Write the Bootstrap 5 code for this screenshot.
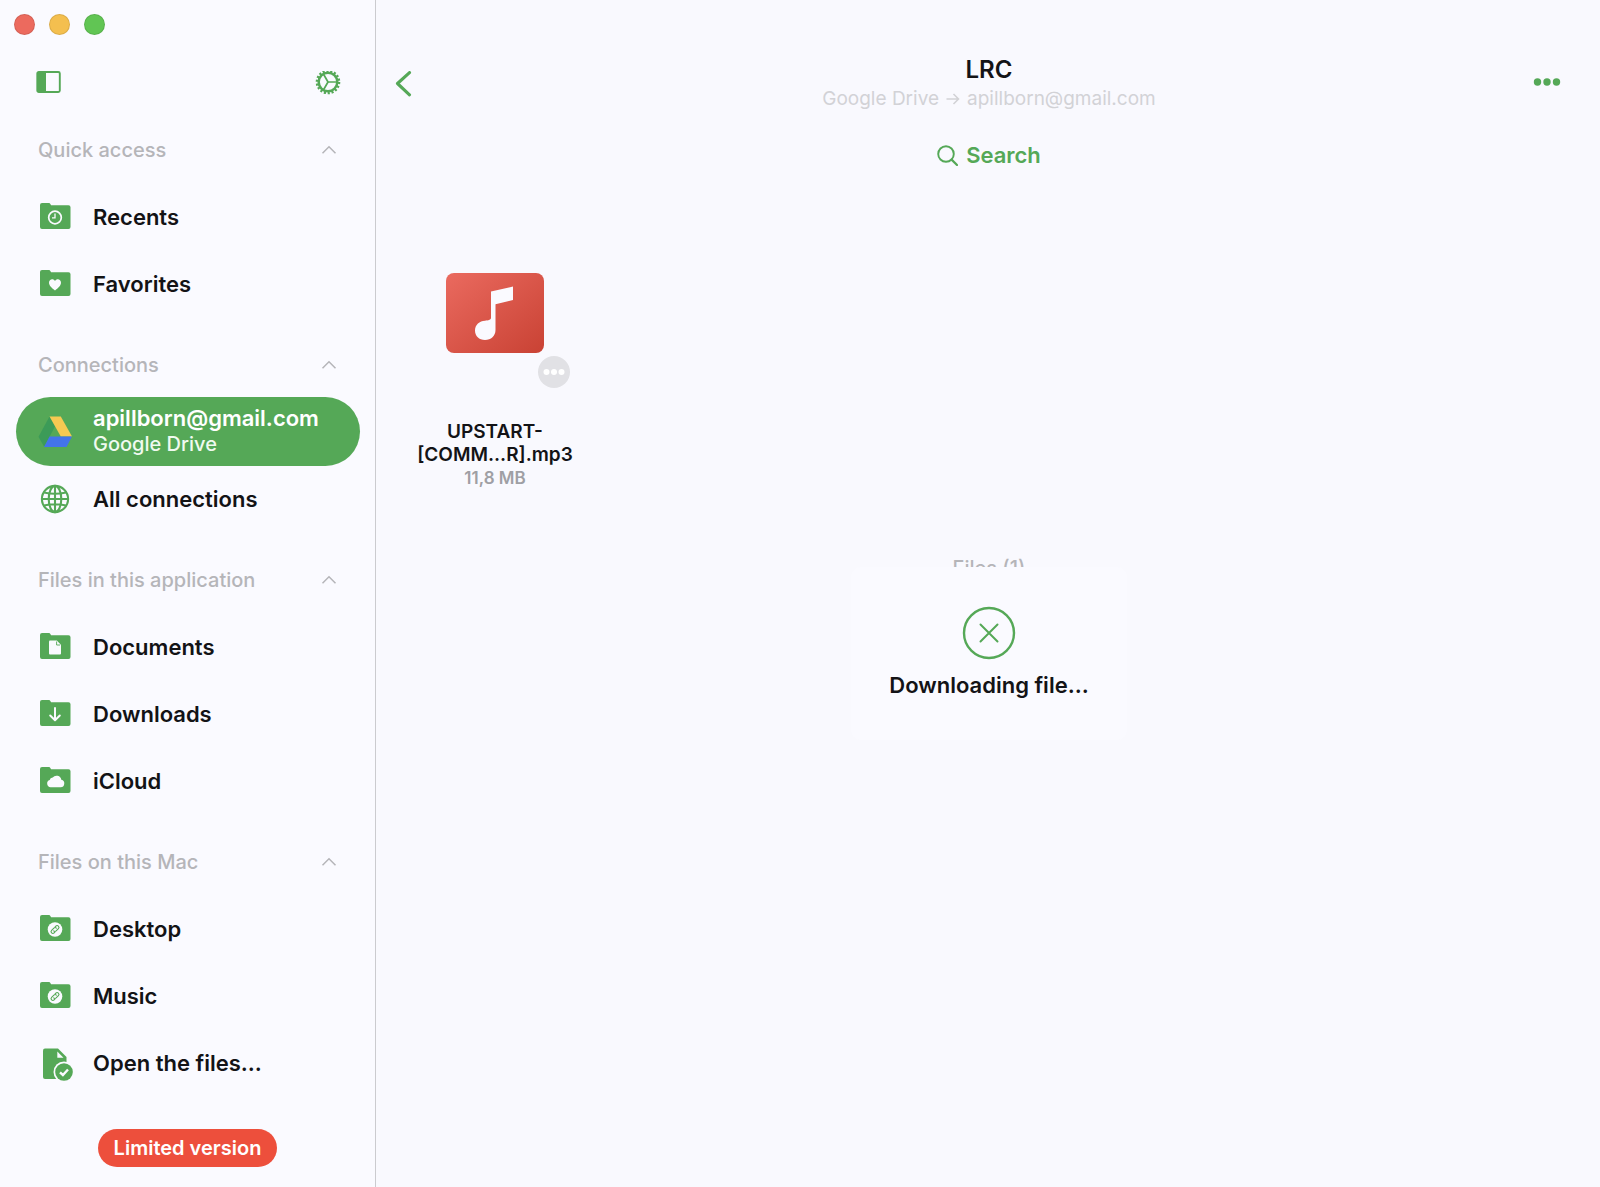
<!DOCTYPE html>
<html lang="en">
<head>
<meta charset="utf-8">
<meta name="viewport" content="width=device-width, initial-scale=1">
<title>LRC</title>
<link href="https://cdn.jsdelivr.net/npm/bootstrap@5.3.0/dist/css/bootstrap.min.css" rel="stylesheet">
<style>
  :root { --green: #55a857; --ink: #131316; --grey: #b5b5b9; --side: #fafaff; --pane: #f9f9fe; }
  body { font-family: Inter, "Liberation Sans", sans-serif; color: var(--ink); background: var(--pane); }
  button { font: inherit; color: inherit; background: none; border: 0; padding: 0; }
  svg { display: block; flex: none; }
  .sidebar { width: 376px; background: var(--side); border-right: 1px solid #cbcbcf; }
  .lights { height: 49px; padding-left: 14px; gap: 14px; }
  .light { width: 21px; height: 21px; border-radius: 50%; border: 1px solid rgba(0,0,0,.1); }
  .tools { height: 54px; padding: 6px 34px 0 36px; align-items: flex-start !important; }
  .group-head { width: 100%; height: 81px; padding: 12px 38px 0 38px; font-size: 20px; font-weight: 500; color: var(--grey); }
  .entry { height: 67px; margin: 0 15px 0 16px; padding: 0 0 2px 19px; gap: 18px; font-size: 22px; font-weight: 600; line-height: 26px; color: var(--ink); text-decoration: none; }
  .entry > svg { margin-top: 2px; }
  .entry.current { height: 69px; margin-top: -2px; border-radius: 35px; background: var(--green); color: #fff; }
  .entry .sub { font-size: 20px; font-weight: 500; color: #f0faf0; }
  .limited { height: 38px; margin-top: 32px; padding: 0 16px; border-radius: 19px; background: #ed4f3c; color: #fff; font-size: 20px; font-weight: 600; }
  .pane { padding-left: 2px; min-width: 0; }
  .bar { padding: 55px 17px 0; }
  .bar-side { flex: 1 1 0; }
  .actions { margin: 23px 22px 0 0; }
  .bar h1 { font-size: 24px; font-weight: 600; line-height: 30px; margin: 0; }
  .crumb { font-size: 19px; line-height: 28px; gap: 7px; color: #d2d2d6; }
  .search { margin-top: 28px; gap: 8px; font-size: 22px; font-weight: 600; line-height: 28px; color: var(--green); }
  .files { padding: 104px 0 0 39px; }
  .tile { width: 156px; font-size: 19px; font-weight: 600; line-height: 23px; }
  .thumb { width: 98px; margin-bottom: 67px; }
  .more { right: -26px; top: 83px; }
  .size { font-size: 17px; line-height: 25px; color: #9f9fa4; }
  .count { margin-top: 65px; font-size: 20px; font-weight: 500; line-height: 24px; color: var(--grey); }
  .overlay { inset: 120px 0 0 2px; }
  .hud { width: 276px; height: 173px; padding-top: 39px; gap: 9px; border-radius: 10px; background: var(--side); font-size: 22px; font-weight: 600; }
</style>
<script src="https://cdn.jsdelivr.net/npm/bootstrap@5.3.0/dist/js/bootstrap.bundle.min.js"></script>
</head>
<body>
<svg width="0" height="0" class="position-absolute" aria-hidden="true">
  <defs>
    <symbol id="folder" viewBox="0 0 40 40"><path fill="#55a857" d="M7 5h6.500c1 0 1.600.400 2 1.200l.600 1H33.500a2 2 0 0 1 2 2V29a2 2 0 0 1-2 2H7a2 2 0 0 1-2-2V7a2 2 0 0 1 2-2z"/></symbol>
    <symbol id="up" viewBox="0 0 16 10"><path fill="none" stroke="#b5b5b9" stroke-width="1.500" d="M1.500 8.300 8 1.800l6.500 6.500"/></symbol>
    <symbol id="linked" viewBox="0 0 40 40"><use href="#folder"/><circle cx="20" cy="19.500" r="7.300" fill="#fafaff"/><g fill="none" stroke="#55a857" stroke-width="1.100" stroke-linecap="round" transform="rotate(-45 20 19.500)"><path d="M18 21.300h-1a1.800 1.800 0 0 1 0-3.600h3.200a1.800 1.800 0 0 1 1.700 1.800"/><path d="M22 17.700h1a1.800 1.800 0 0 1 0 3.600h-3.200a1.800 1.800 0 0 1-1.700-1.800"/></g></symbol>
  </defs>
</svg>
<div class="d-flex min-vh-100">
  <aside class="sidebar flex-shrink-0 d-flex flex-column">
    <div class="lights d-flex align-items-center">
      <button class="light" style="background:#ec6a5e" aria-label="Close"></button>
      <button class="light" style="background:#f4bf4f" aria-label="Minimize"></button>
      <button class="light" style="background:#61c554" aria-label="Zoom"></button>
    </div>
    <div class="tools d-flex justify-content-between">
      <button aria-label="Toggle sidebar" class="pt-3"><svg width="25" height="22" viewBox="0 0 25 22"><rect x="1.300" y="1" width="22.500" height="20" rx="1.500" fill="none" stroke="#55a857" stroke-width="1.900"/><path fill="#55a857" d="M1 1h9v20H1z"/></svg></button>
      <button aria-label="Settings" class="pt-3"><svg width="26" height="26" viewBox="0 0 26 26" fill="none" stroke="#55a857"><g transform="translate(0 -.5)"><circle cx="13" cy="11.500" r="9.300" stroke-width="2.500"/><circle cx="13" cy="11.500" r="11" stroke-width="2.600" stroke-dasharray="2.100 1.739"/><path stroke-width="1.700" d="M13 11.500h8.500M13 11.500 8.700 4M13 11.500 8.700 19"/></g></svg></button>
    </div>
    <nav>
      <button class="group-head d-flex align-items-center justify-content-between" aria-expanded="true"><span>Quick access</span><svg width="16" height="10"><use href="#up"/></svg></button>
      <a href="#" class="entry d-flex align-items-center"><svg width="40" height="40"><use href="#folder"/><circle cx="20" cy="19.500" r="6.300" fill="none" stroke="#fafaff" stroke-width="1.700"/><path d="M20 15.500v4.300h-3" fill="none" stroke="#fafaff" stroke-width="1.300"/></svg>Recents</a>
      <a href="#" class="entry d-flex align-items-center"><svg width="40" height="40"><use href="#folder"/><path fill="#fafaff" d="M20 25.500c-3-2.200-6-4.800-6-7.700 0-3.900 4.500-4.600 6-1.700 1.500-2.900 6-2.200 6 1.700 0 2.900-3 5.500-6 7.700z"/></svg>Favorites</a>

      <button class="group-head d-flex align-items-center justify-content-between" aria-expanded="true"><span>Connections</span><svg width="16" height="10"><use href="#up"/></svg></button>
      <a href="#" class="entry current d-flex align-items-center" aria-current="page"><svg width="40" height="40"><path fill="#3c9b58" d="m14.500 4.500 5.500 9.800L9.300 35l-5.800-10.300z"/><path fill="#f6c952" d="M14.500 4.500h11.300L37 24.500H25.800z"/><path fill="#4374ea" d="M14.500 24.500H37L31.500 35H9z"/></svg><span class="d-flex flex-column">apillborn@gmail.com<span class="sub">Google Drive</span></span></a>
      <a href="#" class="entry d-flex align-items-center"><svg width="40" height="40" fill="none" stroke="#55a857" stroke-width="2.100"><circle cx="20" cy="19" r="13.100"/><ellipse cx="20" cy="19" rx="6.300" ry="13.100"/><path d="M20 5.900v26.200M6.900 19h26.200M9 12.500q11 2.400 22 0M9 25.500q11-2.400 22 0"/></svg>All connections</a>

      <button class="group-head d-flex align-items-center justify-content-between" aria-expanded="true"><span>Files in this application</span><svg width="16" height="10"><use href="#up"/></svg></button>
      <a href="#" class="entry d-flex align-items-center"><svg width="40" height="40"><use href="#folder"/><path fill="#fafaff" d="M15 12.500h6.800l4.200 4.300V25.500a1 1 0 0 1-1 1H15a1 1 0 0 1-1-1v-12a1 1 0 0 1 1-1z"/><path d="M21.600 13.500v3.500h3.500" fill="none" stroke="#55a857" stroke-width=".9"/></svg>Documents</a>
      <a href="#" class="entry d-flex align-items-center"><svg width="40" height="40"><use href="#folder"/><path fill="none" stroke="#fafaff" stroke-width="2" stroke-linecap="round" stroke-linejoin="round" d="M20 13v12M15.200 20.500 20 25.200l4.800-4.700"/></svg>Downloads</a>
      <a href="#" class="entry d-flex align-items-center"><svg width="40" height="40"><use href="#folder"/><path fill="#fafaff" d="M15.600 25.300a3.700 3.700 0 0 1-.900-7.200 3 3 0 0 1 3-2.500 4.800 4.800 0 0 1 8.600 2.200 3.800 3.800 0 0 1-1.100 7.500z"/></svg>iCloud</a>

      <button class="group-head d-flex align-items-center justify-content-between" aria-expanded="true"><span>Files on this Mac</span><svg width="16" height="10"><use href="#up"/></svg></button>
      <a href="#" class="entry d-flex align-items-center"><svg width="40" height="40"><use href="#linked"/></svg>Desktop</a>
      <a href="#" class="entry d-flex align-items-center"><svg width="40" height="40"><use href="#linked"/></svg>Music</a>
      <a href="#" class="entry d-flex align-items-center"><svg width="40" height="40"><path fill="#55a857" d="M10 4.500h13l8.500 8.500v20a2 2 0 0 1-2 2H10a2 2 0 0 1-2-2v-26.500a2 2 0 0 1 2-2z"/><path fill="#fafaff" d="M22.300 7.500v6.200h6.200z"/><circle cx="29" cy="28" r="10.500" fill="#fafaff"/><circle cx="29" cy="28" r="8.800" fill="#55a857"/><path fill="none" stroke="#fafaff" stroke-width="2.400" d="m25 28.300 2.900 2.700 5.100-5.500"/></svg>Open the files...</a>
    </nav>
    <button class="limited align-self-center">Limited version</button>
  </aside>

  <main class="pane flex-grow-1 position-relative">
    <header class="bar d-flex align-items-start">
      <div class="bar-side d-flex pt-3"><button aria-label="Back"><svg width="22" height="26" viewBox="0 0 22 26"><path d="M14.500 1.600 2.500 12.500l12 11.300" fill="none" stroke="#55a857" stroke-width="3.100" stroke-linecap="round" stroke-linejoin="round"/></svg></button></div>
      <div class="d-flex flex-column align-items-center">
        <h1>LRC</h1>
        <div class="crumb d-flex align-items-center">Google Drive<svg width="14" height="12" viewBox="0 0 14 12"><path d="M.5 6h12M7.500 1l5 5-5 5" fill="none" stroke="#d2d2d6" stroke-width="1.600"/></svg>apillborn@gmail.com</div>
        <button class="search d-flex align-items-center"><svg width="21" height="21" viewBox="0 0 21 21"><circle cx="9" cy="9" r="7.800" fill="none" stroke="#55a857" stroke-width="1.900"/><path d="m14.600 14.600 5.400 5.400" stroke="#55a857" stroke-width="2.200" stroke-linecap="round"/></svg>Search</button>
      </div>
      <div class="bar-side d-flex justify-content-end"><button class="actions" aria-label="More actions"><svg width="28" height="8" viewBox="0 0 28 8" fill="#55a857"><circle cx="4.500" cy="4" r="3.700"/><circle cx="14" cy="4" r="3.700"/><circle cx="23.500" cy="4" r="3.700"/></svg></button></div>
    </header>
    <section class="files">
      <div class="tile d-flex flex-column align-items-center text-center">
        <div class="thumb position-relative">
          <svg width="98" height="80" viewBox="0 0 98 80"><defs><linearGradient id="red" x1="0" y1="0" x2="1" y2="1"><stop offset="0" stop-color="#ea6a5f"/><stop offset="1" stop-color="#c94234"/></linearGradient></defs><rect width="98" height="80" rx="8" fill="url(#red)"/><path fill="#fafaff" d="M45 18.500 67 13.500V27l-17.500 4.200V57c0 6-4.500 10-10.500 10s-10-4-10-9.500c0-6 4.500-9.500 10-9.800 3-.2 6-.9 6-2.700z"/></svg>
          <button class="more position-absolute" aria-label="File actions"><svg width="32" height="32"><circle cx="16" cy="16" r="16" fill="#e1e1e5"/><g fill="#fff"><circle cx="8.500" cy="16" r="3"/><circle cx="16" cy="16" r="3"/><circle cx="23.500" cy="16" r="3"/></g></svg></button>
        </div>
        <div>UPSTART-<br>[COMM...R].mp3</div>
        <div class="size">11,8 MB</div>
      </div>
    </section>
    <div class="count text-center">Files (1)</div>
    <div class="overlay position-absolute d-flex align-items-center justify-content-center">
      <div class="hud d-flex flex-column align-items-center" role="status">
        <button aria-label="Cancel download"><svg width="54" height="54" fill="none" stroke="#55a857"><circle cx="27" cy="27" r="25" stroke-width="2.400"/><path stroke-width="2" stroke-linecap="round" d="m18.500 18.500 17 17m0-17-17 17"/></svg></button>
        <span>Downloading file...</span>
      </div>
    </div>
  </main>
</div>
</body>
</html>
